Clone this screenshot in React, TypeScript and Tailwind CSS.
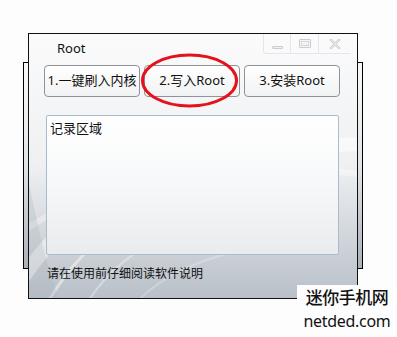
import React from "react";

const font = "font-['Noto_Sans','Noto_Sans_CJK_SC',sans-serif]";

function WinControls() {
  return (
    <div className="flex h-[20px] border-l border-b border-[#e4e7ea] rounded-bl-[3px]">
      <div className="flex w-[27px] items-center justify-center border-r border-[#e4e7ea]">
        <div className="mt-[8px] h-[3px] w-[11px] rounded-[1px] border border-[#c9cdd2] bg-[#eef0f2]" />
      </div>
      <div className="flex w-[28px] items-center justify-center border-r border-[#e4e7ea]">
        <div className="h-[9px] w-[12px] rounded-[1px] border border-[#c9cdd2] bg-[#f3f4f6] flex items-center justify-center">
          <div className="h-[5px] w-[8px] border border-[#d3d7db]" />
        </div>
      </div>
      <div className="flex w-[32px] items-center justify-center">
        <svg width="12" height="10" viewBox="0 0 12 10">
          <path d="M2 1 L10 9 M10 1 L2 9" stroke="#cdd1d6" strokeWidth="2.4" strokeLinecap="square" />
          <path d="M2 1 L10 9 M10 1 L2 9" stroke="#eef0f2" strokeWidth="0.8" />
        </svg>
      </div>
    </div>
  );
}

function Btn({ label }: { label: string }) {
  return (
    <button className="flex h-[32px] w-[96px] items-center justify-center rounded-[4px] border border-[#8f9296] bg-gradient-to-b from-[#ffffff] to-[#f1f2f3] text-[13px] text-[#111]">
      {label}
    </button>
  );
}

export default function App() {
  return (
    <div className={`relative h-[337px] w-[397px] overflow-hidden bg-[#fdfdfd] ${font}`}>
      {/* shadow frame behind the window */}
      <div className="absolute left-[23px] top-[62px] h-[207px] w-[340px] border border-black bg-gradient-to-b from-[#f7f8f9] via-[#e2e5e8] to-[#aab1b9]" />

      <div className="relative ml-[28px] pt-[33px]">
        <div className="relative flex h-[266px] w-[330px] flex-col overflow-hidden border border-[#111] bg-gradient-to-b from-[#fbfbfc] via-[#eef0f2] to-[#b9c0c8]">
          <svg className="pointer-events-none absolute inset-0" width="330" height="266" viewBox="0 0 330 266">
            <path d="M-10 250 C 40 170, 120 120, 330 110" stroke="#ffffff" strokeOpacity="0.5" strokeWidth="14" fill="none" />
            <path d="M-10 200 C 60 150, 160 120, 330 140" stroke="#ffffff" strokeOpacity="0.35" strokeWidth="6" fill="none" />
            <path d="M20 266 C 60 200, 110 170, 200 150" stroke="#ffffff" strokeOpacity="0.45" strokeWidth="3" fill="none" />
            <path d="M60 266 C 90 220, 140 190, 240 170" stroke="#ffffff" strokeOpacity="0.35" strokeWidth="2" fill="none" />
            <path d="M110 266 C 140 235, 190 215, 300 200" stroke="#ffffff" strokeOpacity="0.25" strokeWidth="2" fill="none" />
            <path d="M0 150 L0 266 L30 266 C 15 225, 8 185, 0 150 Z" fill="#a7aeb7" fillOpacity="0.25" />
          </svg>

          <div className="relative flex h-[31px] items-start justify-between">
            <div className="pl-[28px] pt-[5px] text-[13px] leading-[18px] text-[#111]">Root</div>
            <div className="mr-[6px]">
              <WinControls />
            </div>
          </div>

          <div className="relative ml-[15px] flex gap-[4px]">
            <Btn label="1.一键刷入内核" />
            <Btn label="2.写入Root" />
            <Btn label="3.安装Root" />
          </div>

          <div className="relative ml-[17px] mt-[18px] h-[140px] w-[293px] rounded-[2px] border border-[#a9bccb] bg-gradient-to-b from-[#ffffff] via-[#f7f8f9] to-[#e9ebed] px-[3px] pt-[4px] text-[13px] leading-[16px] text-[#111]">
            记录区域
          </div>

          <div className="relative ml-[18px] mt-[11px] text-[12px] leading-[16px] text-[#111]">
            请在使用前仔细阅读软件说明
          </div>
        </div>
      </div>

      {/* red marker */}
      <svg className="pointer-events-none absolute left-0 top-0" width="397" height="337" viewBox="0 0 397 337">
        <ellipse cx="189.5" cy="80.5" rx="47" ry="25.5" fill="none" stroke="#e5121b" strokeWidth="3" />
      </svg>

      {/* watermark */}
      <div className="absolute left-[297px] top-[285px] flex h-[52px] w-[100px] flex-col items-center bg-[#fdfdfd] pt-[3px] text-[#111]">
        <div className="text-[17px] font-medium leading-[20px] tracking-[-0.5px]">迷你手机网</div>
        <div className="mt-[3px] text-[16px] leading-[20px] tracking-[-0.3px]">netded.com</div>
      </div>
    </div>
  );
}
